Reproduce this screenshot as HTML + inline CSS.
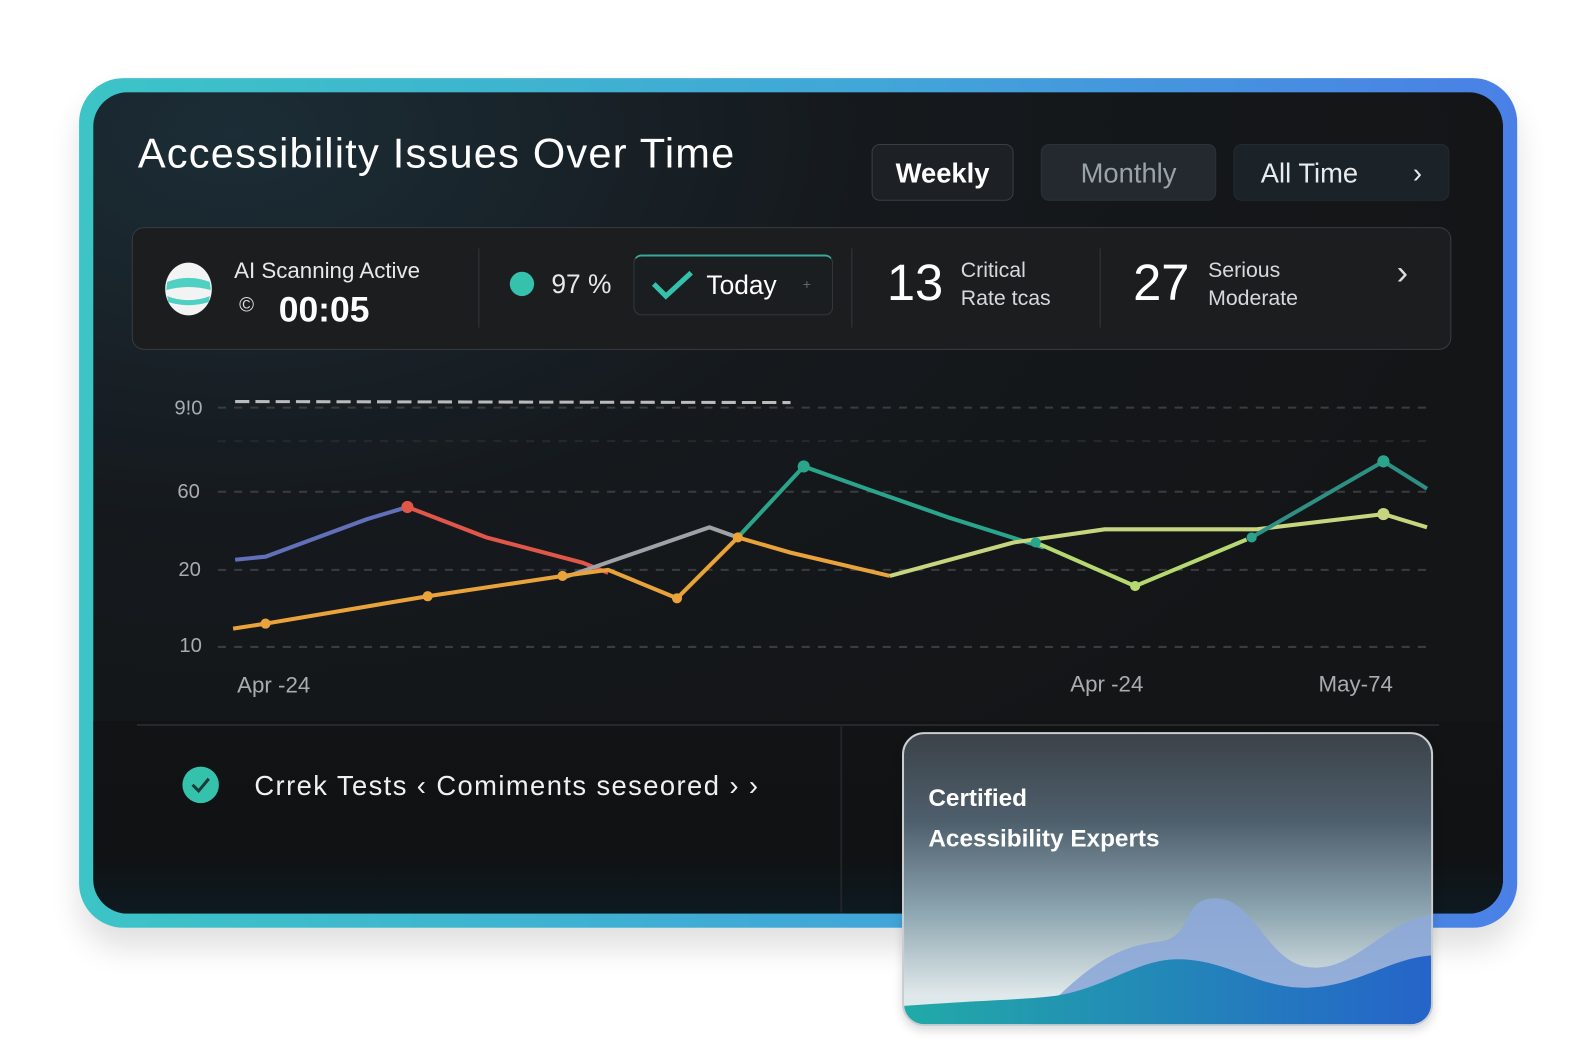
<!DOCTYPE html>
<html><head><meta charset="utf-8"><style>
*{margin:0;padding:0;box-sizing:border-box}
html,body{width:1590px;height:1040px;overflow:hidden;background:#fff}
#w{position:absolute;left:0;top:0;width:1560px;height:1020px;transform:scale(1.0135,1.014);transform-origin:0 0;font-family:"Liberation Sans",sans-serif;color:#fff}
.a{position:absolute}
#frame{left:78px;top:77px;width:1419px;height:838px;border-radius:44px;background:linear-gradient(90deg,#3cc4c6,#41a6d8 55%,#4a80e6);box-shadow:0 20px 30px rgba(0,0,0,.12)}
#inner{left:92px;top:91px;width:1391px;height:810px;border-radius:34px;background:radial-gradient(ellipse at 10% 5%,#1c2d36 0%,#15191d 35%,#141517 70%),#141517;overflow:hidden}
.btn{top:142px;height:56px;border-radius:8px;font-size:27px;line-height:56px;text-align:center;border:1px solid #3a3f45;background:#1d2024}
.dv{width:1px;background:#33363a}
</style></head><body><div id="w">
<div class="a" id="frame"></div>
<div class="a" id="inner">
 <div class="a" style="left:0;right:0;top:620px;bottom:0;background:linear-gradient(180deg,#121315,#101214 70%,#0d1a20)"></div>
</div>
<div class="a" style="left:136px;top:128px;font-size:41px;letter-spacing:1.2px;white-space:nowrap">Accessibility Issues Over Time</div>
<div class="a btn" style="left:860px;width:140px;font-weight:bold">Weekly</div>
<div class="a btn" style="left:1027px;width:173px;color:#9aa3a8;background:#23292e;border-color:#2c3237">Monthly</div>
<div class="a btn" style="left:1217px;width:213px;text-align:left;padding-left:26px;color:#e8ecee;background:#1b2329;border-color:#232b30">All Time<span style="position:absolute;right:26px">›</span></div>

<div class="a" style="left:130px;top:224px;width:1302px;height:121px;border:1px solid #383c40;border-radius:12px;background:#1c1d1f"></div>
<svg class="a" style="left:160px;top:256px" width="52" height="56" viewBox="0 0 52 56"><ellipse cx="26" cy="29" rx="23" ry="26" fill="#f2f4f4"/><path d="M5 22 Q26 14 47 22 L48 30 Q26 24 4 30Z" fill="#4fd0c3"/><path d="M5 36 Q26 44 47 36 L46 42 Q26 48 6 42Z" fill="#4fd0c3"/></svg>
<div class="a" style="left:231px;top:254px;font-size:22px;color:#e6e8ea">AI Scanning Active</div>
<div class="a" style="left:236px;top:290px;font-size:20px;color:#ddd">©</div>
<div class="a" style="left:275px;top:286px;font-size:35px;font-weight:bold">00:05</div>
<div class="a dv" style="left:472px;top:245px;height:78px"></div>
<div class="a" style="left:503px;top:268px;width:24px;height:24px;border-radius:50%;background:#35c2ad"></div>
<div class="a" style="left:544px;top:265px;font-size:26px;color:#e6e8ea">97 %</div>
<div class="a" style="left:625px;top:251px;width:197px;height:60px;border:1px solid #33383c;border-top:2px solid #3aa79a;border-radius:8px;background:#1a1e20"></div>
<svg class="a" style="left:642px;top:266px" width="44" height="32"><path d="M3 14 L15 26 L40 3" stroke="#35c2ad" stroke-width="5" fill="none"/></svg>
<div class="a" style="left:697px;top:266px;font-size:26px">Today</div>
<div class="a" style="left:792px;top:272px;font-size:14px;color:#666">+</div>
<div class="a dv" style="left:840px;top:245px;height:78px"></div>
<div class="a" style="left:875px;top:250px;font-size:50px">13</div>
<div class="a" style="left:948px;top:253px;font-size:21px;color:#d6d9dc;line-height:28px">Critical<br>Rate tcas</div>
<div class="a dv" style="left:1085px;top:245px;height:78px"></div>
<div class="a" style="left:1118px;top:250px;font-size:50px">27</div>
<div class="a" style="left:1192px;top:253px;font-size:21px;color:#d6d9dc;line-height:28px">Serious<br>Moderate</div>
<div class="a" style="left:1378px;top:250px;font-size:34px;color:#ddd">›</div>

<svg class="a" style="left:0;top:0" width="1560" height="1020">
<g stroke="#3a3d40" stroke-width="2" stroke-dasharray="8 8"><line x1="215" y1="402" x2="1410" y2="402"/><line x1="215" y1="435" x2="1410" y2="435" stroke="#26292b"/><line x1="215" y1="485" x2="1410" y2="485"/><line x1="215" y1="562" x2="1410" y2="562"/><line x1="215" y1="638" x2="1410" y2="638"/></g>
<line x1="232" y1="396" x2="780" y2="397" stroke="#bbb" stroke-width="3" stroke-dasharray="14 6"/>
<g font-family="Liberation Sans" font-size="20" fill="#a8acae"><text x="172" y="409">9!0</text><text x="175" y="491">60</text><text x="176" y="568">20</text><text x="177" y="643">10</text>
<text x="234" y="683" font-size="22">Apr -24</text><text x="1056" y="682" font-size="22">Apr -24</text><text x="1301" y="682" font-size="22">May-74</text></g>
<g fill="none" stroke-width="4" stroke-linejoin="round">
<polyline points="232,552 262,549 362,512 402,500" stroke="#6170b8"/>
<polyline points="402,500 480,530 575,555 600,565" stroke="#e0574a"/>
<polyline points="555,570 700,520 728,530" stroke="#9fa3a8"/>
<polyline points="230,620 262,615 422,588 555,568 600,562 668,590 728,530 780,545 878,568" stroke="#e9a33a"/>
<polyline points="728,530 793,460 855,482 935,510 1030,540" stroke="#2aa58c"/>
<polyline points="878,568 1000,535 1090,522 1240,522 1365,507 1408,520" stroke="#c7d57f"/>
<polyline points="1022,535 1120,578 1230,532" stroke="#b6d870"/>
<polyline points="1235,530 1365,455 1408,482" stroke="#2e8f84"/>
</g>
<g fill="#e9a33a"><circle cx="262" cy="615" r="5"/><circle cx="422" cy="588" r="5"/><circle cx="555" cy="568" r="5"/><circle cx="668" cy="590" r="5"/><circle cx="728" cy="530" r="5"/></g>
<g fill="#2aa58c"><circle cx="793" cy="460" r="6"/><circle cx="1365" cy="455" r="6"/><circle cx="1235" cy="530" r="5"/><circle cx="1022" cy="535" r="5"/></g>
<circle cx="402" cy="500" r="6" fill="#e0574a"/><circle cx="1365" cy="507" r="6" fill="#c7d57f"/><circle cx="1120" cy="578" r="5" fill="#b6d870"/>
<line x1="135" y1="715" x2="1420" y2="715" stroke="#26292c" stroke-width="2"/>
<line x1="830" y1="715" x2="830" y2="900" stroke="#222528" stroke-width="2"/>
<circle cx="198" cy="774" r="18" fill="#35c2ad"/><path d="M190 774 L196 780 L206 768" stroke="#1c3a36" stroke-width="3" fill="none"/>
<text x="251" y="784" font-family="Liberation Sans" font-size="27" letter-spacing="1.4" fill="#f0f0f0">Crrek Tests  ‹  Comiments seseored › ›</text>
</svg>

<div class="a" style="left:890px;top:722px;width:524px;height:290px;border-radius:22px;overflow:hidden;background:linear-gradient(180deg,#3c4248 0%,#4e5f6c 30%,#8aa3ae 60%,#dfe8ea 90%);border:2px solid #c9ced2;box-shadow:0 4px 10px rgba(0,0,0,.15)">
<svg class="a" style="left:0;top:0" width="524" height="290">
<path d="M120 290 C170 240 200 210 250 205 C290 200 270 160 310 162 C350 165 360 235 410 230 C450 228 480 180 524 178 L524 290Z" fill="#8da8d8" opacity="0.9"/>
<path d="M0 268 C80 262 120 262 150 258 C200 250 230 222 270 222 C320 222 350 252 400 250 C450 248 480 220 524 218 L524 290 L0 290Z" fill="url(#g)"/>
<defs><linearGradient id="g" x1="0" x2="1"><stop offset="0" stop-color="#21aaa7"/><stop offset="1" stop-color="#2563c9"/></linearGradient></defs>
</svg>
<div class="a" style="left:24px;top:44px;font-size:24px;font-weight:bold;line-height:40px">Certified<br>Acessibility Experts</div>
</div>
</div></body></html>
